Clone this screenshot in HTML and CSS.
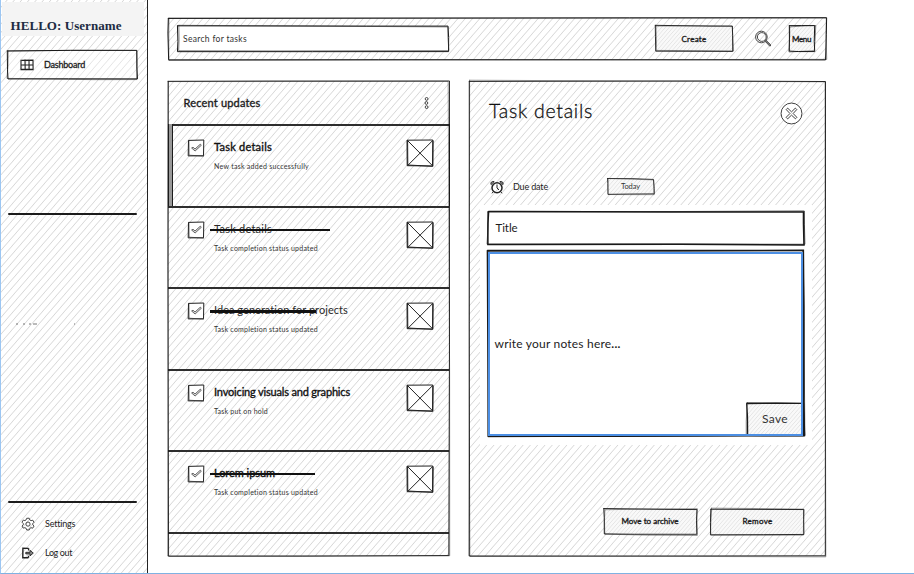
FILE: index.html
```html
<!DOCTYPE html>
<html lang="en">
<head>
<meta charset="utf-8">
<title>Tasks</title>
<link rel="stylesheet" href="styles.css">
</head>
<body>
<div class="app">
  <aside class="sidebar hatch">
    <header class="greeting"><span data-width="111">HELLO: Username</span></header>
    <a class="nav-item nav-active" data-sketch="1">
      <svg class="nav-icon" viewBox="0 0 14 12"><path d="M1 1.2 13 1 13.1 10.6 1 10.8ZM5 .6 5.2 11M9 .8 9.1 11M.8 6 13.2 5.8M2 1.4 12.6 1.5M1.5 10.3 12.5 10.2" fill="none" stroke="#222" stroke-width="1.1"/></svg>
      <span data-width="41">Dashboard</span>
    </a>
    <div class="rule rule-top"></div>
    <svg class="marks" viewBox="0 0 60 2"><path d="M1 1H3M8 1H10M14 1H16M18 1H22M59 1H60" stroke="#777" stroke-width="1"/></svg>
    <div class="rule rule-bottom"></div>
    <a class="nav-item nav-settings">
      <svg class="nav-icon" viewBox="0 0 14 14"><path d="M5.7 1.3 8.2 1.2 8.7 2.9 10.1 3.6 11.8 3.2 13 5.3 11.8 6.5 11.8 7.8 13 9.1 11.7 11.2 10 10.7 8.8 11.4 8.2 13 5.8 13 5.2 11.4 3.9 10.7 2.2 11.1 1 9 2.3 7.8 2.2 6.4 1 5.2 2.3 3.1 3.9 3.6 5.1 2.9Z" fill="none" stroke="#333" stroke-width=".9"/><circle cx="7" cy="7.1" r="2.1" fill="none" stroke="#333" stroke-width=".9"/></svg>
      <span data-width="30">Settings</span>
    </a>
    <a class="nav-item nav-logout">
      <svg class="nav-icon" viewBox="0 0 14 14"><path d="M7.5 2.4 1.9 2.2 1.8 11.8 7.4 11.7M7.6 2.3V4.4M7.5 9.7V11.7" fill="none" stroke="#222" stroke-width="1.4"/><path d="M4.8 6.3H9V4.3L12.3 7.1 9 9.9V7.9H4.8Z" fill="#888" stroke="#222" stroke-width=".9"/></svg>
      <span data-width="27">Log out</span>
    </a>
  </aside>

  <main class="main">
    <div class="topbar hatch" data-sketch="1">
      <div class="search" data-sketch="1"><span data-width="64">Search for tasks</span></div>
      <button class="btn btn-create" data-sketch=".9"><span data-width="25">Create</span></button>
      <svg class="search-icon" viewBox="0 0 18 18" fill="none" stroke="#333" stroke-width=".9"><circle cx="7.4" cy="7" r="5.8"/><circle cx="7.8" cy="7" r="4.4"/><path d="M11.2 11.3 12.2 10.4 16.9 15 15.8 16.2ZM12 11.4 16.2 15.5"/></svg>
      <button class="btn btn-menu" data-sketch="1"><span data-width="19">Menu</span></button>
    </div>

    <div class="columns">
      <section class="updates hatch" data-sketch=".9">
        <header class="updates-head">
          <h2 data-width="77">Recent updates</h2>
          <svg class="dots" viewBox="0 0 5 12" fill="none" stroke="#333" stroke-width=".9"><circle cx="2.6" cy="1.9" r="1.4"/><circle cx="2.4" cy="6" r="1.4"/><circle cx="2.6" cy="10.1" r="1.4"/></svg>
        </header>
        <article class="row row-current">
          <svg class="check"><use href="#check"/></svg>
          <div class="row-text"><h3 class="strong"><span data-width="58">Task details</span></h3><p><span data-width="95">New task added successfully</span></p></div>
          <svg class="thumb"><use href="#thumb"/></svg>
        </article>
        <article class="row">
          <svg class="check"><use href="#check"/></svg>
          <div class="row-text"><h3 class="done done-long"><span data-width="58">Task details</span></h3><p><span data-width="104">Task completion status updated</span></p></div>
          <svg class="thumb"><use href="#thumb"/></svg>
        </article>
        <article class="row">
          <svg class="check"><use href="#check"/></svg>
          <div class="row-text"><h3 class="done done-thick"><span data-width="134">Idea generation for projects</span></h3><p><span data-width="104">Task completion status updated</span></p></div>
          <svg class="thumb"><use href="#thumb"/></svg>
        </article>
        <article class="row">
          <svg class="check"><use href="#check"/></svg>
          <div class="row-text"><h3 class="strong"><span data-width="136">Invoicing visuals and graphics</span></h3><p><span data-width="54">Task put on hold</span></p></div>
          <svg class="thumb"><use href="#thumb"/></svg>
        </article>
        <article class="row">
          <svg class="check"><use href="#check"/></svg>
          <div class="row-text"><h3 class="strong done"><span data-width="61">Lorem ipsum</span></h3><p><span data-width="104">Task completion status updated</span></p></div>
          <svg class="thumb"><use href="#thumb"/></svg>
        </article>
        <div class="list-end"></div>
      </section>

      <section class="details hatch" data-sketch=".9">
        <header class="details-head">
          <h1 data-width="104">Task details</h1>
          <svg class="close" viewBox="0 0 24 24" fill="none" stroke="#222" stroke-width=".9"><circle cx="12" cy="12" r="10.9" fill="#fff"/><path d="M8 6.4 12 10.3 16 6.4 17.5 7.9 13.7 12 17.6 16 16.1 17.5 12 13.7 8 17.6 6.4 16 10.4 12 6.5 7.9Z"/></svg>
        </header>
        <div class="due">
          <svg class="clock" viewBox="0 0 14 14" fill="none" stroke="#222"><circle cx="7" cy="7.7" r="5" stroke-width="1.5"/><path d="M7 4.5V8L9 10M3 12 2 13.3M11 12 12 13.3" stroke-width="1"/><path d="M1 4.6C.2 2.5 2 .8 4.2 1.6ZM13 4.6C13.8 2.5 12 .8 9.8 1.6Z" fill="#999" stroke-width=".9"/></svg>
          <span class="due-label"><span data-width="35">Due date</span></span>
          <button class="btn btn-today" data-sketch=".8"><span data-width="19">Today</span></button>
        </div>
        <div class="form">
          <div class="title-field" data-sketch="1.5"><span data-width="22">Title</span></div>
          <div class="notes" data-sketch="1.6"><span class="placeholder" data-width="126">write your notes here<b>...</b></span>
            <button class="btn btn-save" data-sketch="1.2"><span data-width="26">Save</span></button>
          </div>
        </div>
        <footer class="actions">
          <button class="btn" data-sketch=".9"><span data-width="57">Move to archive</span></button>
          <button class="btn" data-sketch=".9"><span data-width="30">Remove</span></button>
        </footer>
      </section>
    </div>
  </main>
</div>
<svg class="defs" width="0" height="0">
  <symbol id="check" viewBox="0 0 18 18"><path d="M1.5 1.4 16.8 1 16.5 16.8 1.2 16.9Z" fill="#fff" stroke="#222" stroke-width="1"/><path d="M1.9 1 2.1 16.2 16.9 17.1" fill="none" stroke="#222" stroke-width=".6"/><path d="M4.6 9 6 8.2 8 10 13.3 5.2 14.3 6.3 8.1 12Z" fill="#ddd" stroke="#444" stroke-width=".8"/></symbol>
  <symbol id="thumb" viewBox="0 0 28 28"><path d="M1 1.2 26.8 1 26.5 27 1.2 26.7Z" fill="#fff" stroke="#222" stroke-width="1"/><path d="M1.6 1 1.8 26 26.9 27.3 27.1 1.8M1 1 26.6 26.8M1.4 26.8 26.9 1.3" fill="none" stroke="#222" stroke-width="1"/></symbol>
</svg>
<script src="sketch.js"></script>
</body>
</html>
```
FILE: sketch.js
```js
// Hand-drawn outlines: two slightly different strokes over each box.
let seed = 11;
const rand = () => {
  seed = (seed * 16807) % 2147483647;
  return seed / 2147483647;
};
const jitter = (amount) => (rand() - 0.5) * 2 * amount;
const NS = "http://www.w3.org/2000/svg";

function outline(w, h, amount) {
  const corners = [[0, 0], [w, 0], [w, h], [0, h]].map(([x, y]) => [x + jitter(amount), y + jitter(amount)]);
  let d = `M${corners[0]}`;
  for (let i = 1; i <= 4; i++) {
    const a = corners[i - 1];
    const b = corners[i % 4];
    const t = 0.3 + rand() * 0.4;
    const mid = [a[0] + (b[0] - a[0]) * t + jitter(0.5), a[1] + (b[1] - a[1]) * t + jitter(0.5)];
    d += `L${mid}L${b}`;
  }
  return d;
}

document.querySelectorAll("[data-sketch]").forEach((box) => {
  const { width, height } = box.getBoundingClientRect();
  const weight = Number(box.dataset.sketch);
  const svg = document.createElementNS(NS, "svg");
  svg.setAttribute("class", "sketch-frame");
  [[weight, 0.7], [weight * 0.5, 1]].forEach(([stroke, amount]) => {
    const path = document.createElementNS(NS, "path");
    path.setAttribute("d", outline(width, height, amount));
    path.setAttribute("stroke-width", stroke);
    svg.appendChild(path);
  });
  box.appendChild(svg);
});

document.querySelectorAll("[data-width]").forEach((el) => {
  const range = document.createRange();
  range.selectNodeContents(el);
  const natural = range.getBoundingClientRect().width;
  el.style.letterSpacing = (el.dataset.width - natural) / el.textContent.length + "px";
});
```
FILE: styles.css
```css
* { box-sizing: border-box; margin: 0; padding: 0; }
body { width: 914px; height: 574px; overflow: hidden; background: #fff; color: #1c1c1c; font-family: Lato, "Open Sans", sans-serif; font-size: 9px; white-space: nowrap; }
h1, h2, h3 { font-weight: 400; }
button { font: inherit; color: inherit; border: 0; }
.defs { position: absolute; }
.app { display: flex; height: 574px; border-left: 1px solid #9cc6f2; border-bottom: 1px solid #7fb2e2; }
.hatch { background: repeating-linear-gradient(131deg, #fff 0, #fff 3.9px, #d8d8d8 4.7px, #fff 5.5px); }
[data-sketch] { position: relative; }
.sketch-frame { position: absolute; inset: 0; width: 100%; height: 100%; overflow: visible; pointer-events: none; fill: none; stroke: #1a1a1a; stroke-linecap: round; }

.sidebar { width: 147px; border-right: 1px solid #222; display: flex; flex-direction: column; }
.greeting { height: 34px; margin: 2px 3px 0 1px; padding-left: 8.5px; background: #f4f4f4; color: #202b42; font: bold 13px/47px "Liberation Serif", serif; }
.nav-item { display: flex; align-items: center; gap: 10px; height: 28px; padding-left: 20px; font-size: 9px; }
.nav-active { margin: 15px 10px 0 7px; padding-left: 12px; background: rgba(255,255,255,.35); -webkit-text-stroke: .3px; }
.nav-item span { margin-top: -1px; }
.nav-icon { width: 14px; height: 14px; flex: none; }
.rule { height: 2px; margin: 0 10px 0 7px; background: #1c1c1c; border-radius: 1px; }
.rule-top { margin-top: 134px; }
.marks { width: 60px; height: 2px; margin: 108px 0 0 14px; }
.rule-bottom { margin-top: 176px; }
.nav-settings { margin-top: 7px; }
.nav-logout { margin-top: 1px; }

.main { padding: 18px 0 0 19.5px; width: 678px; }
.topbar { display: flex; align-items: center; height: 41.5px; width: 658px; padding-left: 10.5px; }
.search { display: flex; align-items: center; width: 270.5px; height: 25px; padding-left: 5px; background: #fff; color: #333; font-size: 8.5px; }
.btn { display: flex; align-items: center; justify-content: center; background: repeating-linear-gradient(131deg, #f9f9f9 0, #f9f9f9 1.5px, #e4e4e4 2.2px, #f9f9f9 2.9px); }
.btn-create { width: 77px; height: 25px; margin-left: 207px; font-size: 8px; -webkit-text-stroke: .35px; }
.search-icon { width: 18px; height: 18px; margin-left: 21.5px; }
.btn-menu { width: 26px; height: 25px; margin-left: 16.5px; font-size: 8px; -webkit-text-stroke: .35px; }

.columns { display: flex; gap: 20px; margin-top: 21px; }
.updates { width: 281px; height: 475px; }
.updates-head { display: flex; align-items: center; justify-content: space-between; height: 43.5px; padding: 1px 20px 0 16px; }
.updates-head h2 { font-size: 11px; -webkit-text-stroke: .35px; }
.dots { width: 5px; height: 12px; }
.row { position: relative; display: flex; align-items: flex-start; height: 81.6px; padding: 15px 14.5px 0 19px; }
.row::before, .list-end::before { content: ""; position: absolute; left: 0; right: 0; top: 0; height: 2px; background: #2e2e2e; }
.row-current { margin-right: -1px; padding-right: 15.5px; border-right: 1.5px solid #1c1c1c; }
.row-current::after { content: ""; position: absolute; left: 0; top: 0; bottom: 0; width: 3px; background: #999; border: solid #1c1c1c; border-width: 0 1px 0 1px; }
.row-current .thumb { margin-right: -1px; }
.check { width: 18px; height: 18px; flex: none; }
.row-text { flex: 1; padding-left: 9.5px; }
.row h3 { position: relative; font-size: 11px; line-height: 16px; color: #2a2a2a; }
.row .strong { color: #111; -webkit-text-stroke: .35px; }
.row p { font-size: 7px; line-height: 12px; margin-top: 5px; color: #333; }
.thumb { width: 28px; height: 28px; flex: none; }
.done::after { content: ""; position: absolute; left: -4px; top: 8px; width: 105px; height: 2px; background: #111; }
.done-long::after { width: 120px; }
.done-thick::after { height: 2.4px; width: 106px; }
.list-end { position: relative; }

.details { width: 357px; height: 475px; padding-top: 20px; }
.details-head { display: flex; align-items: center; justify-content: space-between; height: 26px; padding: 0 23px 0 20.5px; }
.details-head h1 { margin-top: -5px; font-size: 19.5px; font-weight: 300; line-height: 24px; color: #111; -webkit-text-stroke: .3px; }
.close { width: 23px; height: 23px; }
.due { display: flex; align-items: center; height: 18px; margin-top: 51px; padding-left: 21.5px; }
.clock { width: 14px; height: 14px; }
.due-label { width: 94.5px; margin-left: 9px; font-size: 9px; }
.btn-today { width: 46px; height: 15.5px; font-size: 7.5px; color: #333; }
.form { margin: 9.5px 14px 0 11px; padding: 7px 8px 8px 8px; height: 240px; background: #fff; }
.title-field { height: 32.5px; padding-left: 8px; font-size: 11.5px; line-height: 31px; }
.notes { display: flex; align-items: center; height: 185px; margin-top: 6.5px; padding-left: 7px; font-size: 12px; background: #fff; }
.notes::after { content: ""; position: absolute; inset: .5px; border: 2px solid #4c8fe4; pointer-events: none; }
.notes .btn-save { position: absolute; right: 0; bottom: 0; width: 57px; height: 33px; font-size: 12px; color: #333; }
.btn-save span { margin-top: -2px; }
.actions { display: flex; justify-content: flex-end; gap: 14.5px; margin-top: 63.5px; padding-right: 21.5px; }
.actions .btn { width: 93px; height: 25.5px; font-size: 8px; -webkit-text-stroke: .35px; }
.actions span { margin-top: -1px; }
```
